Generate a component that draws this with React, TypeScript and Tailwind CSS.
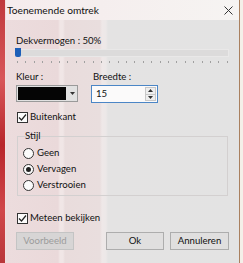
import React from "react";

const font = { fontFamily: 'Lato, "Noto Sans", sans-serif' };

function Check() {
  return (
    <span className="w-[11px] h-[11px] border border-[#333] bg-[#fbfbfb] flex items-center justify-center shrink-0">
      <svg width="9" height="9" viewBox="0 0 9 9">
        <path d="M1 4.5 L3.5 7 L8 1.5" fill="none" stroke="#222" strokeWidth="1.2" />
      </svg>
    </span>
  );
}

function Radio({ on }: { on?: boolean }) {
  return (
    <span className="w-[11px] h-[11px] rounded-full border border-[#333] bg-[#fbfbfb] flex items-center justify-center shrink-0">
      {on && <span className="w-[5px] h-[5px] rounded-full bg-[#222]" />}
    </span>
  );
}

export default function App() {
  const ticks = Array.from({ length: 26 });
  return (
    <div className="w-[243px] h-[263px] overflow-hidden flex text-[9.6px] text-[#111]" style={font}>
      <div className="w-[5px] shrink-0 bg-[linear-gradient(180deg,#c0393c,#d8575a_30%,#b8262b_55%,#d0474a_80%,#b9373a)]" />
      <div className="w-[235px] shrink-0 flex flex-col border-l border-l-[#f3dede] border-r border-r-[#a9805f] bg-[linear-gradient(90deg,#ecdcdd_0px,#ead9da_52px,#f1e6e6_54px,#f0e6e6_57px,#e9dcdc_59px,#e9dede_94px,#efe8e8_96px,#ece8e8_100px,#e4e3e3_102px,#e3e3e3_100%)]">
        <div className="h-[20px] flex items-center pl-[1px] pr-[6px] bg-[linear-gradient(90deg,#f6eced,#f5eeee_95px,#f6f4f2_100%)]">
          <span className="leading-[14px] text-[10.2px]">Toenemende omtrek</span>
          <svg className="ml-auto" width="9" height="9" viewBox="0 0 9 9">
            <path d="M0.5 0.5 L8.5 8.5 M8.5 0.5 L0.5 8.5" stroke="#333" strokeWidth="1" />
          </svg>
        </div>
        <div className="flex flex-col pl-[10px] pr-[10px]">
          <div className="mt-[14px] leading-[14px]">Dekvermogen : 50%</div>
          <div className="relative h-[9px]">
            <div className="mt-[1px] h-[8px] bg-[#dcdbdb] border border-[#e9e8e8]" />
            <div className="absolute left-[-1px] top-0 w-[6px] h-[9px] bg-[#1d5fb8] rounded-b-[2px]" />
          </div>
          <div className="mt-[4px] h-[2px] flex justify-between px-[1px]">
            {ticks.map((_, i) => (
              <span key={i} className="w-[1px] h-[2px] bg-[#a0a0a0]" />
            ))}
          </div>
          <div className="mt-[7px] flex">
            <div className="flex flex-col w-[75px]">
              <span className="leading-[14px]">Kleur :</span>
              <div className="mt-[1px] w-[62px] h-[17px] border border-[#9a9a9a] bg-[#e1e1e1] flex">
                <div className="w-[48px] m-[1px] bg-[#050505]" />
                <div className="flex-1 flex items-center justify-center">
                  <svg width="5" height="3" viewBox="0 0 5 3"><path d="M0 0 H5 L2.5 3 Z" fill="#333" /></svg>
                </div>
              </div>
            </div>
            <div className="flex flex-col">
              <span className="leading-[14px] ml-[2px]">Breedte :</span>
              <div className="mt-[1px] w-[67px] h-[18px] border border-[#4b86c6] bg-[#fbfafa] flex items-center">
                <span className="ml-[4px] leading-[14px]">15</span>
                <div className="ml-auto mr-[1px] w-[11px] h-[14px] flex flex-col">
                  <div className="flex-1 border border-[#c8c8c8] bg-[#eeeeee] flex items-center justify-center">
                    <svg width="5" height="3" viewBox="0 0 5 3"><path d="M0 3 H5 L2.5 0 Z" fill="#333" /></svg>
                  </div>
                  <div className="flex-1 border border-[#c8c8c8] border-t-0 bg-[#eeeeee] flex items-center justify-center">
                    <svg width="5" height="3" viewBox="0 0 5 3"><path d="M0 0 H5 L2.5 3 Z" fill="#333" /></svg>
                  </div>
                </div>
              </div>
            </div>
          </div>
          <div className="mt-[7px] flex items-center gap-[2px] ml-[1px]">
            <Check />
            <span className="leading-[14px]">Buitenkant</span>
          </div>
          <div className="relative mt-[12px] ml-[1px] mr-[1px] h-[60px] border border-[#d3d0d0]">
            <span className="absolute left-[6px] top-[-8px] px-[1px] leading-[14px]">Stijl</span>
            <div className="flex flex-col gap-[2px] mt-[9px] ml-[5px]">
              <div className="flex items-center gap-[3px] h-[14px]"><Radio /><span className="leading-[14px]">Geen</span></div>
              <div className="flex items-center gap-[3px] h-[14px]"><Radio on /><span className="leading-[14px]">Vervagen</span></div>
              <div className="flex items-center gap-[3px] h-[14px]"><Radio /><span className="leading-[14px]">Verstrooien</span></div>
            </div>
          </div>
          <div className="mt-[15px] flex items-center gap-[2px] ml-[1px]">
            <Check />
            <span className="leading-[14px]">Meteen bekijken</span>
          </div>
          <div className="mt-[7px] flex">
            <div className="w-[58px] h-[18px] border border-[#c4c4c4] bg-[#d7d5d5] text-[#9c9c9c] flex items-center justify-center leading-[14px]">Voorbeeld</div>
            <div className="ml-auto w-[58px] h-[18px] border border-[#adadad] bg-[#e0dfdf] flex items-center justify-center leading-[14px]">Ok</div>
            <div className="ml-[6px] w-[59px] h-[18px] border border-[#adadad] bg-[#e0dfdf] flex items-center justify-center leading-[14px]">Annuleren</div>
          </div>
        </div>
      </div>
      <div className="flex-1 bg-[#f4efe9]" />
    </div>
  );
}
